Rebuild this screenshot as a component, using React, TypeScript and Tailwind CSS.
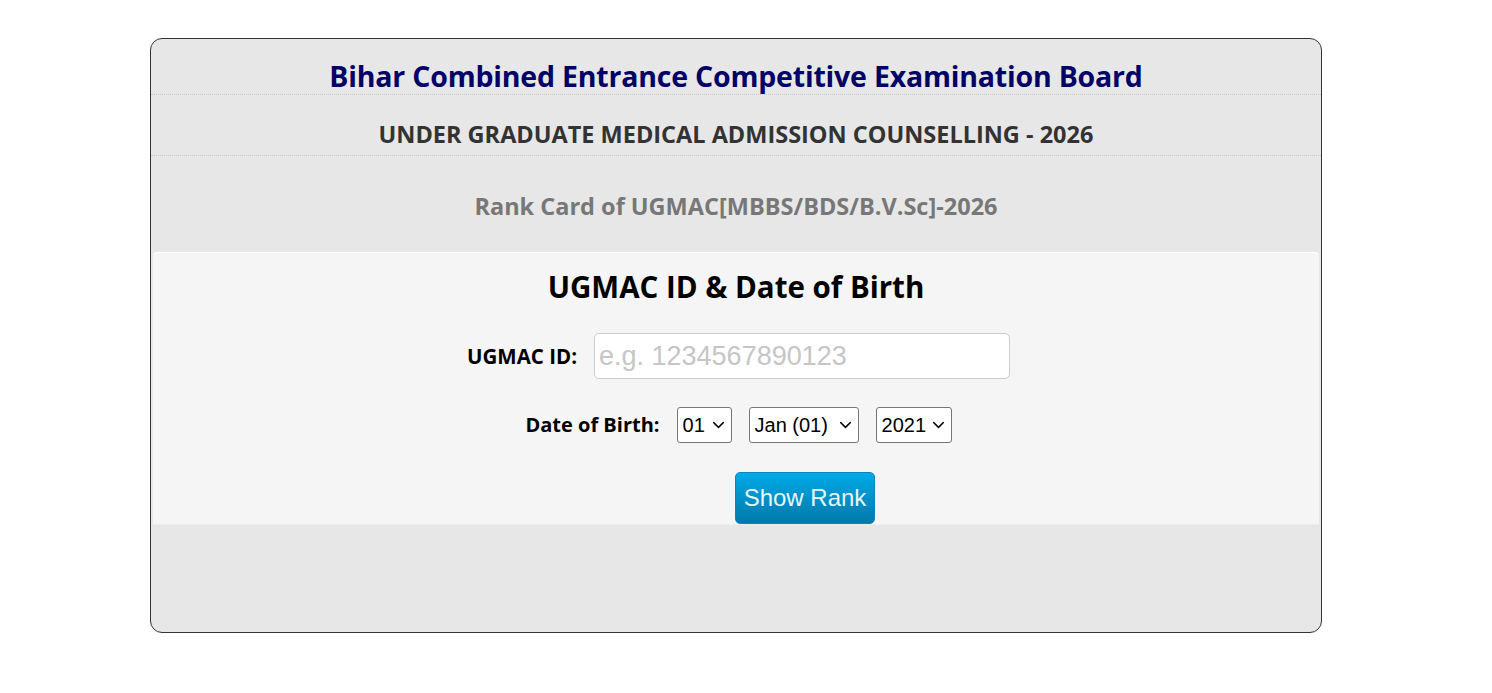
import { ChevronDown } from "lucide-react";

const days = ["01", "02", "03", "04", "05"];
const months = ["Jan (01)", "Feb (02)", "Mar (03)"];
const years = ["2021", "2020", "2019"];

function Select({ options, width }: { options: string[]; width: string }) {
  return (
    <div className={`relative h-[36px] ${width}`}>
      <select
        defaultValue={options[0]}
        className="h-full w-full appearance-none rounded-[3px] border border-[#767676] bg-white pl-[5px] pr-6 font-['Liberation_Sans',Arial,sans-serif] text-[20px] text-black outline-none"
      >
        {options.map((option) => (
          <option key={option}>{option}</option>
        ))}
      </select>
      <ChevronDown
        className="pointer-events-none absolute right-[4px] top-1/2 h-[19px] w-[19px] -translate-y-1/2 text-black"
        strokeWidth={1.8}
      />
    </div>
  );
}

export default function App() {
  return (
    <main className="min-h-screen bg-white pt-[38px] font-['Open_Sans','Noto_Sans',sans-serif]">
      <div className="ml-[150px] flex h-[595px] w-[1172px] flex-col rounded-[12px] border border-[#333] bg-[#e7e7e7]">
        <div className="h-[56px] border-b border-dotted border-[#c8c8c8] pt-[19px] text-center">
          <h1 className="text-[28.5px] leading-[36px] font-bold tracking-[-0.2px] text-[#000066]">
            Bihar Combined Entrance Competitive Examination Board
          </h1>
        </div>
        <div className="h-[61px] border-b border-dotted border-[#c8c8c8] pt-[24px] text-center">
          <h2 className="text-[23.5px] leading-[30px] font-bold text-[#333]">
            UNDER GRADUATE MEDICAL ADMISSION COUNSELLING - 2026
          </h2>
        </div>
        <div className="h-[96px] pt-[35px] text-center">
          <h3 className="text-[23.5px] leading-[30px] font-bold text-[#777]">Rank Card of UGMAC[MBBS/BDS/B.V.Sc]-2026</h3>
        </div>

        <div className="mx-[2px] flex h-[272px] flex-col rounded-t-[4px] border-t border-white bg-[#f5f5f5] shadow-[0_1px_0_#ededed]">
          <h4 className="mt-[16px] text-center text-[29.5px] leading-[36px] font-bold text-black">
            UGMAC ID &amp; Date of Birth
          </h4>

          <div className="mt-[28px] ml-[5px] flex items-center justify-center gap-[17px]">
            <label className="text-[20.5px] font-bold text-black">UGMAC ID:</label>
            <input
              type="text"
              placeholder="e.g. 1234567890123"
              className="h-[46px] w-[416px] rounded-[5px] border border-[#ccc] bg-white px-[4px] font-['Liberation_Sans',Arial,sans-serif] text-[27px] text-black outline-none placeholder:text-[#c6c6c6]"
            />
          </div>

          <div className="mt-[28px] ml-[5px] flex items-center justify-center">
            <label className="mr-[17px] text-[20px] font-bold text-black">Date of Birth:</label>
            <div className="flex items-center gap-[17px]">
              <Select options={days} width="w-[55px]" />
              <Select options={months} width="w-[110px]" />
              <Select options={years} width="w-[76px]" />
            </div>
          </div>

          <div className="mt-auto flex">
            <div className="w-1/2" />
            <button
              type="button"
              className="ml-[-1px] h-[52px] w-[140px] rounded-[5px] border border-[#0a86b8] bg-gradient-to-b from-[#00aae8] to-[#0079aa] font-['Liberation_Sans',Arial,sans-serif] text-[24px] text-[#e6f7ff]"
            >
              Show Rank
            </button>
          </div>
        </div>
      </div>
    </main>
  );
}
